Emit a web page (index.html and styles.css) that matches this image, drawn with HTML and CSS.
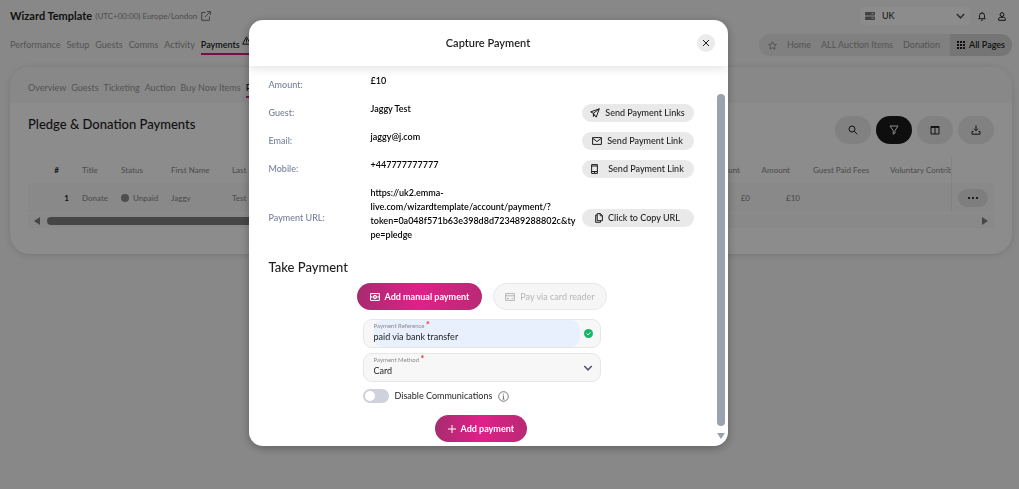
FILE: index.html
```html
<!DOCTYPE html>
<html lang="en">
<head>
    <meta charset="utf-8">
    <title>Wizard Template - Payments</title>
    <link rel="stylesheet" href="styles.css">
</head>
<body>
    <header class="top">
        <div class="bar">
            <h1>Wizard Template</h1>
            <span class="zone">(UTC+00:00) Europe/London</span>
            <a href="#" class="open" aria-label="Open site"><svg width="10" height="10" viewBox="0 0 10 10"><path d="M4.5 1.5H.7v7.8h7.8V5.5M6 .6h3.4V4M9.2.8 4 6"/></svg></a>
            <div class="server">
                <svg width="10" height="8" viewBox="0 0 10 8"><rect width="10" height="3.5" rx="1"/><rect y="4.5" width="10" height="3.5" rx="1"/><path d="M6.5 1.7h2M6.5 6.2h2"/></svg>
                <select aria-label="Server"><option>UK</option></select>
                <svg class="chevron" width="9" height="6" viewBox="0 0 9 6"><path d="m.8 1 3.7 3.8L8.200 1"/></svg>
            </div>
            <button class="icon" aria-label="Notifications"><svg width="8" height="9" viewBox="0 0 8 9"><path d="M.7 6.700h6.600L6.500 5.500V3.500a2.500 2.500 0 0 0-5 0v2zM4 1V.2M3.200 8.300h1.600"/></svg></button>
            <button class="icon" aria-label="Profile"><svg width="8" height="9" viewBox="0 0 8 9"><circle cx="4" cy="2.600" r="1.900"/><path d="M.7 8.300V7c0-1 .8-1.700 1.700-1.700h3.200c.9 0 1.700.7 1.700 1.700v1.300z"/></svg></button>
        </div>
        <div class="bar">
            <nav class="tabs">
                <a href="#">Performance</a>
                <a href="#">Setup</a>
                <a href="#">Guests</a>
                <a href="#">Comms</a>
                <a href="#">Activity</a>
                <a href="#" class="active">Payments<svg width="9" height="9" viewBox="0 0 9 9"><path d="M4.500.8.6 8.200h7.800zM4.500 3.200v2.500M4.500 6.400v.9"/></svg></a>
            </nav>
            <nav class="quick">
                <svg width="9" height="9" viewBox="0 0 9 9"><path d="m4.500.6 1.200 2.600 2.800.3-2.100 1.900.6 2.800-2.500-1.400L2 8.200l.6-2.800L.5 3.500l2.800-.3z"/></svg>
                <a href="#">Home</a>
                <a href="#">ALL Auction Items</a>
                <a href="#">Donation</a>
                <button class="all-pages">
                    <svg width="8" height="8" viewBox="0 0 8 8"><path d="M0 0h2v2H0zM3 0h2v2H3zM6 0h2v2H6zM0 3h2v2H0zM3 3h2v2H3zM6 3h2v2H6zM0 6h2v2H0zM3 6h2v2H3zM6 6h2v2H6z"/></svg>
                    All Pages
                </button>
            </nav>
        </div>
    </header>

    <main class="card">
        <nav class="tabs subtabs">
            <a href="#">Overview</a>
            <a href="#">Guests</a>
            <a href="#">Ticketing</a>
            <a href="#">Auction</a>
            <a href="#">Buy Now Items</a>
            <a href="#" class="active">Pledges</a>
        </nav>
        <div class="card-head">
            <h2>Pledge &amp; Donation Payments</h2>
            <button class="tool" aria-label="Search"><svg width="10" height="10" viewBox="0 0 10 10"><circle cx="4" cy="4" r="3"/><path d="m6.300 6.300 3 3"/></svg></button>
            <button class="tool dark" aria-label="Filter"><svg width="10" height="10" viewBox="0 0 10 10"><path d="M1 1h8L6 5.500V8L4.200 9.200V5.500z"/></svg></button>
            <button class="tool" aria-label="Columns"><svg width="10" height="10" viewBox="0 0 10 10"><path d="M1 1.500h8V9H1zM1 2.400h8M5 2v7"/></svg></button>
            <button class="tool" aria-label="Download"><svg width="10" height="10" viewBox="0 0 10 10"><path d="M5 .5v5M3 3.700l2 2 2-2M2.500 6.500H1v2.700h8V6.500H7.500"/></svg></button>
        </div>
        <table>
            <colgroup>
                <col class="c-num"><col class="c-title"><col class="c-status"><col class="c-name"><col class="c-name">
                <col><col class="c-amount"><col class="c-amount"><col class="c-fees"><col class="c-vol"><col class="c-act">
            </colgroup>
            <thead>
                <tr>
                    <th class="num">#</th>
                    <th>Title</th>
                    <th>Status</th>
                    <th>First Name</th>
                    <th>Last Name</th>
                    <th></th>
                    <th class="money">Amount</th>
                    <th class="money">Amount</th>
                    <th>Guest Paid Fees</th>
                    <th>Voluntary Contribution</th>
                    <th class="act"></th>
                </tr>
            </thead>
            <tbody>
                <tr>
                    <td class="num">1</td>
                    <td>Donate</td>
                    <td><i class="dot"></i>Unpaid</td>
                    <td>Jaggy</td>
                    <td>Test</td>
                    <td></td>
                    <td class="money">£0</td>
                    <td class="money">£10</td>
                    <td></td>
                    <td></td>
                    <td class="act"><button class="more" aria-label="More"><svg width="10" height="2" viewBox="0 0 10 2"><circle cx="1" cy="1" r="1"/><circle cx="5" cy="1" r="1"/><circle cx="9" cy="1" r="1"/></svg></button></td>
                </tr>
            </tbody>
        </table>
        <div class="hscroll">
            <svg width="6" height="8" viewBox="0 0 6 8"><path d="M6 0v8L0 4z"/></svg>
            <div class="hthumb"></div>
            <svg width="6" height="8" viewBox="0 0 6 8"><path d="M0 0v8l6-4z"/></svg>
        </div>
    </main>

    <div class="overlay">
        <section class="modal" role="dialog" aria-labelledby="modal-title">
            <header class="modal-head">
                <h2 id="modal-title">Capture Payment</h2>
                <button class="close" aria-label="Close"><svg width="8" height="8" viewBox="0 0 8 8"><path d="m1 1 6 6M7 1 1 7"/></svg></button>
            </header>
            <div class="modal-body">
                <div class="content">
                    <dl>
                        <div><dt>Amount:</dt><dd>£10</dd></div>
                        <div>
                            <dt>Guest:</dt><dd>Jaggy Test</dd>
                            <button class="pill"><svg width="10" height="10" viewBox="0 0 10 10"><path d="M9.300.8.7 3.900l2.700 1.400L6.200 9.200zM9.300.8 3.400 5.300v3.200l1.300-1.600"/></svg>Send Payment Links</button>
                        </div>
                        <div>
                            <dt>Email:</dt><dd>jaggy@j.com</dd>
                            <button class="pill"><svg width="10" height="8" viewBox="0 0 10 8"><path d="M.6.6h8.800v6.800H.6zM.6 1.200 5 4.600l4.400-3.400"/></svg>Send Payment Link</button>
                        </div>
                        <div>
                            <dt>Mobile:</dt><dd>+447777777777</dd>
                            <button class="pill wide"><svg width="7" height="10" viewBox="0 0 7 10"><path d="M.6.6h5.800v8.800H.6zM.6 2h5.800M.6 7.500h5.800M3 8.500h1"/></svg>Send Payment Link</button>
                        </div>
                        <div>
                            <dt>Payment URL:</dt>
                            <dd>https://uk2.emma-<br>live.com/wizardtemplate/account/payment/?<br>token=0a048f571b63e398d8d723489288802c&amp;ty<br>pe=pledge</dd>
                            <button class="pill"><svg width="8" height="10" viewBox="0 0 8 10"><path d="M2.200.6h3.200l2 2V7.700H2.200zM5.200.6v2.200h2.200M2.200 2H.7v7.300h4.800V7.700"/></svg>Click to Copy URL</button>
                        </div>
                    </dl>
                    <h3>Take Payment</h3>
                    <div class="choices">
                        <button class="primary"><svg width="10" height="8" viewBox="0 0 10 8"><path d="M.6.6h8.800v6.800H.6z"/><circle cx="5" cy="4" r="1.700"/><path d="M1.900 3v2M8.100 3v2M5 3v2"/></svg>Add manual payment</button>
                        <button class="ghost" disabled><svg width="10" height="8" viewBox="0 0 10 8"><path d="M.6.6h8.800v6.800H.6zM.6 2.800h8.800M2 5.500h2M6.500 5.500H8"/></svg>Pay via card reader</button>
                    </div>
                    <form class="fields">
                        <div class="field">
                            <div class="filled">
                                <label for="reference">Payment Reference <b>*</b></label>
                                <input type="text" id="reference" value="paid via bank transfer">
                            </div>
                            <svg class="ok" width="9" height="9" viewBox="0 0 9 9"><circle cx="4.500" cy="4.500" r="4.500"/><path d="m2.600 4.600 1.400 1.300 2.400-2.500"/></svg>
                        </div>
                        <div class="field">
                            <div class="plain">
                                <label for="method">Payment Method <b>*</b></label>
                                <select id="method"><option>Card</option></select>
                            </div>
                            <svg class="chevron" width="10" height="6" viewBox="0 0 9 6"><path d="m.8 1 3.700 3.800L8.200 1"/></svg>
                        </div>
                        <div class="switch">
                            <input type="checkbox" id="disable">
                            <label for="disable">Disable Communications</label>
                            <svg width="11" height="11" viewBox="0 0 11 11"><circle cx="5.500" cy="5.500" r="4.800"/><path d="M5.500 2.700v1M4.700 4.900h.8V8M4.500 8.100h2"/></svg>
                        </div>
                    </form>
                    <button class="primary submit"><svg width="8" height="8" viewBox="0 0 8 8"><path d="M4 0v8M0 4h8"/></svg>Add payment</button>
                </div>
                <div class="vscroll">
                    <div class="vthumb"></div>
                    <svg width="8" height="6" viewBox="0 0 8 6"><path d="M0 0h8L4 6z"/></svg>
                </div>
            </div>
        </section>
    </div>
</body>
</html>
```

FILE: styles.css
```css
* { box-sizing: border-box; }
body { margin: 0; min-height: 100vh; overflow: hidden; background: #f7f7f7; color: #1e1e1e; font-family: Lato, "Liberation Sans", sans-serif; font-size: 9px; line-height: 14px; }
h1, h2, h3, dl, dd { margin: 0; font-weight: 500; }
a { color: inherit; text-decoration: none; }
button, input, select { font: inherit; color: inherit; border: 0; padding: 0; background: none; appearance: none; }
button { display: flex; align-items: center; justify-content: center; }
svg { flex: none; fill: none; stroke: currentColor; stroke-width: 1; }

.top { padding: 6px 7px 0 10px; }
.bar { display: flex; align-items: center; height: 20px; }
.bar + .bar { height: 22px; margin-top: 8px; }
h1 { font-size: 11px; font-weight: 700; }
.zone { margin-left: 3px; color: #8c8c8c; font-size: 8px; }
.open { display: flex; margin-left: 4px; color: #777; }
.server { display: flex; align-items: center; gap: 7px; width: 110px; height: 18px; margin-left: auto; padding: 0 5px; border-radius: 5px; background: #fff; }
.server svg:first-child { fill: #777; stroke: none; }
.server svg:first-child path { stroke: #fff; }
.server select { flex: 1; min-width: 0; }
.chevron { color: #50566c; stroke-width: 1.5; }
.icon { width: 20px; height: 18px; }
.server + .icon { margin-left: 2px; }
.tabs { display: flex; gap: 6px; color: #999; }
.tabs a { height: 19px; line-height: 18px; border-bottom: 2px solid transparent; }
.tabs .active { display: flex; border-color: #d61f86; color: #1e1e1e; font-weight: 600; white-space: nowrap; }
.tabs svg { margin-left: 2px; }
.quick { display: flex; align-items: center; gap: 10px; height: 22px; margin-left: auto; padding-left: 9px; border-radius: 11px; background: #e9e9e9; color: #999; overflow: hidden; }
.all-pages { gap: 4px; height: 22px; padding: 0 7px; background: #d6d6d6; color: #1e1e1e; font-weight: 600; }
.all-pages svg { fill: currentColor; stroke: none; }

.card { margin: 11px 7px 0 10px; padding-bottom: 26px; border-radius: 20px; background: #fff; box-shadow: 0 1px 6px rgba(0, 0, 0, .12); overflow: hidden; }
.subtabs { gap: 5px; height: 36px; padding: 12px 18px 0; background: #f8f8f8; }
.card-head { display: flex; align-items: center; gap: 5px; padding: 12px 18px 12px; height: 53px; }
.card-head h2 { margin-right: auto; padding-bottom: 12px; font-size: 13px; }
.tool { width: 36px; height: 28px; border-radius: 14px; background: #ececec; }
.dark { background: #1a1a1a; color: #fff; }
table { width: calc(100% - 36px); margin: 0 18px; table-layout: fixed; border-collapse: collapse; color: #909090; font-size: 8px; }
th, td { padding: 0 0 0 6px; text-align: left; font-weight: 500; white-space: nowrap; overflow: hidden; }
th { height: 27px; }
td { height: 29px; background: #f9f9f9; }
.c-num { width: 48px; }
.c-title { width: 39px; }
.c-status { width: 50px; }
.c-name { width: 61px; }
.c-amount { width: 50px; }
.c-fees { width: 77px; }
.c-vol { width: 67px; }
.c-act { width: 43px; }
.num { padding: 0 7px 0 0; text-align: right; color: #1e1e1e; font-weight: 700; }
th.num { padding-right: 17px; }
.money { padding: 0 7px 0 0; text-align: right; }
th.money { padding-right: 17px; }
.act { border-left: 1px solid #eee; }
.dot { display: inline-block; width: 8px; height: 8px; margin-right: 4px; border-radius: 50%; background: #909090; vertical-align: -1px; }
.more { width: 30px; height: 18px; border-radius: 9px; background: #e6e6e6; color: #000; }
.more svg { fill: currentColor; stroke: none; }
.hscroll { display: flex; align-items: center; gap: 7px; height: 14px; margin: 2px 18px 0; padding: 0 6px; background: #fafafa; color: #808080; }
.hscroll svg { fill: currentColor; stroke: none; }
.hthumb { width: 70%; height: 8px; margin-right: auto; border-radius: 4px; background: #808080; }

/* modal */
.overlay { position: fixed; inset: 0; display: flex; align-items: flex-start; justify-content: center; padding: 20px 43px 0 0; background: rgba(0, 0, 0, .45); }
.modal { display: flex; flex-direction: column; width: 479px; border-radius: 14px; background: #fff; box-shadow: 0 2px 10px rgba(0, 0, 0, .3); overflow: hidden; }
.modal-head { display: grid; grid-template-columns: 1fr auto 1fr; align-items: center; height: 46px; padding: 0 13px; box-shadow: 0 2px 10px rgba(0, 0, 0, .12); }
.modal-head h2 { grid-column: 2; font-size: 11px; font-weight: 600; }
.close { justify-self: end; width: 18px; height: 18px; border-radius: 50%; background: #ebebeb; }
.modal-body { display: flex; }
.content { flex: 1; padding: 5px 0 4px 20px; }
dl > div { display: grid; grid-template-columns: 102px 211px 112px; align-items: center; }
dt { color: #76829a; }
dd { padding: 3px 0 11px; color: #000; font-weight: 600; white-space: nowrap; }
.pill { width: 112px; height: 18px; gap: 5px; border-radius: 9px; background: #e9e9e9; }
.pill.wide { gap: 10px; }
h3 { margin: 6px 0 8px; font-size: 13px; line-height: 16px; }
.choices { display: flex; gap: 11px; padding-left: 88px; }
.primary, .ghost { gap: 5px; height: 27px; padding: 0 13px; border-radius: 14px; }
.primary { background: linear-gradient(90deg, #a62c6f, #e02089 50%, #b82a74); color: #fff; font-weight: 700; }
.ghost { padding: 0 11px; border: 1px solid #e6e6e6; background: #f6f6f6; color: #b5b5b5; }
.fields { width: 238px; margin: 9px 0 12px 94px; }
.field { display: flex; align-items: center; height: 29px; margin-bottom: 5px; padding: 0 7px 0 10px; border: 1px solid #e6e6e6; border-radius: 9px; background: #f7f7f7; }
.field label { display: block; height: 9px; color: #8a8a8a; font-size: 6px; line-height: 9px; }
.field b { color: #f22; font-size: 9px; line-height: 6px; }
.field input, .field select { display: block; width: 100%; height: 14px; }
.filled, .plain { flex: 1; height: 27px; padding-top: 1px; }
.filled { margin-right: 4px; border-radius: 9px; background: #e8effd; }
.ok { fill: #12b76a; stroke: none; }
.ok path { fill: none; stroke: #fff; }
.switch { display: flex; align-items: center; gap: 6px; padding-top: 2px; }
.switch input { width: 26px; height: 14px; margin: 0; padding: 2px; border-radius: 7px; background: #cfd2dc; }
.switch input::before { content: ""; display: block; width: 10px; height: 10px; border-radius: 50%; background: #fff; }
.switch svg { color: #777; }
.submit { margin-left: 166px; }
.vscroll { display: flex; flex-direction: column; align-items: center; gap: 7px; width: 11px; padding: 28px 3px 7px 0; color: #9aa1b0; }
.vscroll svg { fill: currentColor; stroke: none; }
.vthumb { flex: 1; width: 8px; border-radius: 4px; background: #9aa1b0; }
```
